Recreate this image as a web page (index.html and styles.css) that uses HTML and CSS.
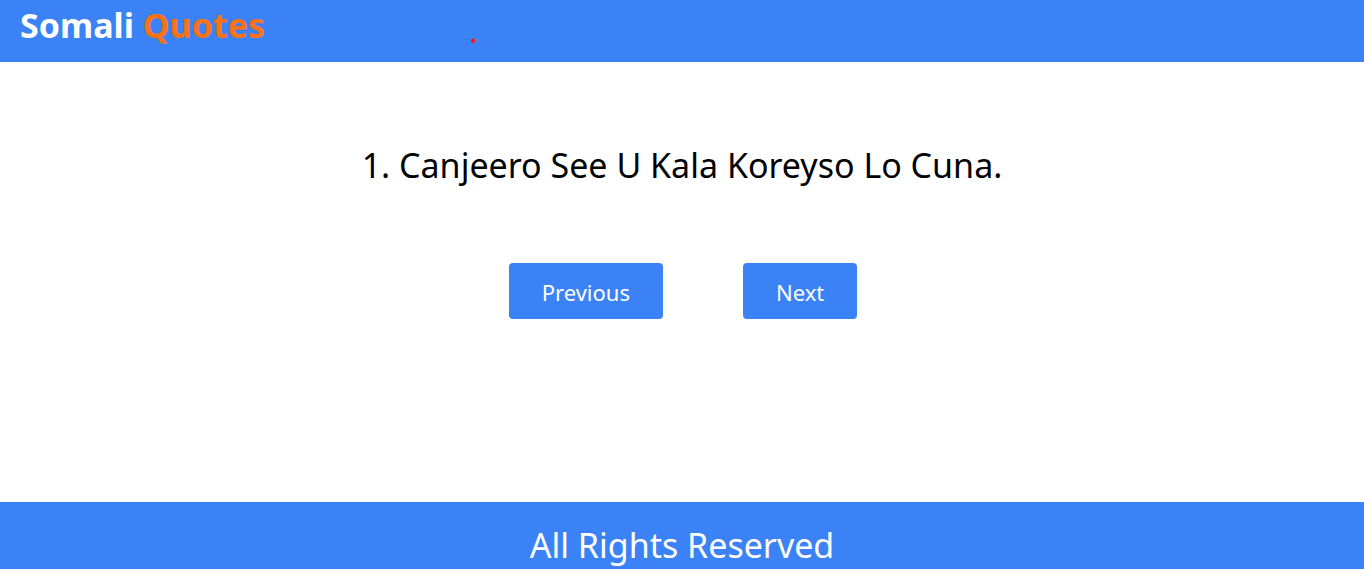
FILE: index.html
```html
<!DOCTYPE html>
<html lang="so">
<head>
<meta charset="utf-8">
<title>Somali Quotes</title>
<link rel="stylesheet" href="styles.css">
</head>
<body>
<header class="topbar">
  <div class="logo"><span class="logo-white">Somali</span> <span class="logo-orange">Quotes</span></div>
  <span class="dot">.</span>
</header>
<main class="content">
  <p class="quote">1. Canjeero See U Kala Koreyso Lo Cuna.</p>
  <div class="actions">
    <button class="btn">Previous</button>
    <button class="btn">Next</button>
  </div>
</main>
<footer class="footer">All Rights Reserved</footer>
</body>
</html>
```
FILE: styles.css
```css
* { box-sizing: border-box; }
html, body { margin: 0; padding: 0; }
body {
  font-family: "Noto Sans", "Open Sans", sans-serif;
  background: #ffffff;
  color: #000;
  overflow: hidden;
}
.topbar {
  height: 62px;
  background: #3b82f6;
  display: flex;
  align-items: flex-start;
  padding: 3px 0 0 20px;
}
.logo {
  font-size: 34px;
  font-weight: 700;
  line-height: 44px;
}
.logo-white { color: #ffffff; }
.logo-orange { color: #f97316; }
.dot {
  color: #ef1c1c;
  font-size: 26px;
  font-weight: 700;
  line-height: 22px;
  margin-left: 205px;
  margin-top: 19px;
}
.content {
  height: 440px;
  display: flex;
  flex-direction: column;
  align-items: center;
}
.quote {
  margin: 80px 0 0;
  font-size: 34px;
  line-height: 46px;
}
.actions {
  display: flex;
  gap: 80px;
  margin-top: 75px;
  padding-left: 2px;
}
.btn {
  font-family: inherit;
  font-size: 22px;
  line-height: 30px;
  height: 56px;
  padding: 2px 33px 0;
  border: none;
  border-radius: 4px;
  background: #3b82f6;
  color: #ffffff;
}
.footer {
  background: #3b82f6;
  color: #ffffff;
  text-align: center;
  font-size: 34px;
  line-height: 48px;
  padding-top: 19px;
  height: 90px;
}
```
